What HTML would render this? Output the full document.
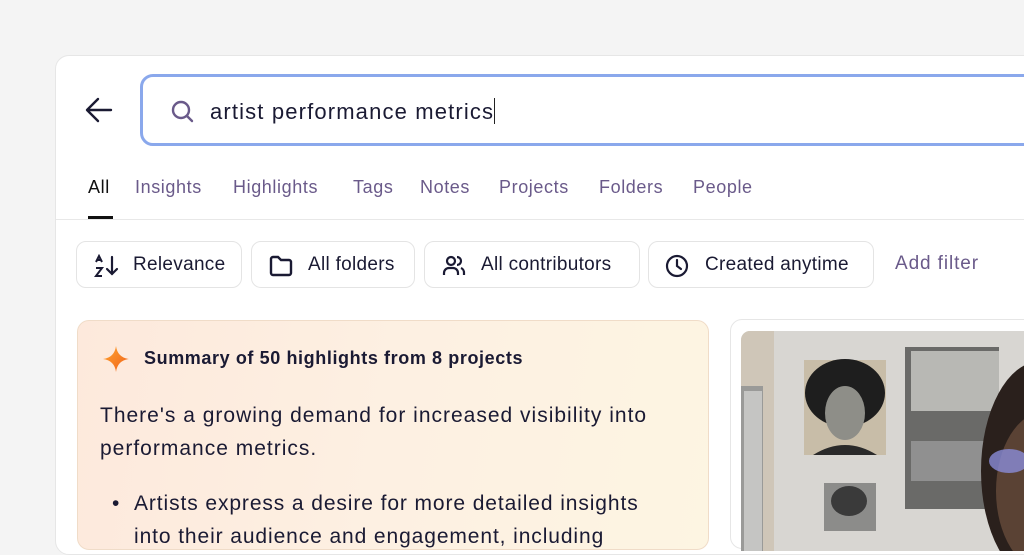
<!DOCTYPE html>
<html><head><meta charset="utf-8"><style>
*{box-sizing:border-box;margin:0;padding:0}
body{width:1024px;height:529px;overflow:hidden;background:#f4f4f4;font-family:"Liberation Sans",sans-serif;color:#1a1a33;position:relative}
.card{position:absolute;left:55px;top:55px;width:1000px;height:500px;background:#fff;border:1px solid #e6e6e6;border-radius:14px}
.search{position:absolute;left:140px;top:74px;width:920px;height:72px;border:3px solid #8aa8ec;border-radius:13px;background:#fff}
.search .txt{position:absolute;left:67px;top:21px;font-size:22px;letter-spacing:1.15px;color:#1a1a33}
.caret{display:inline-block;width:1px;height:26px;background:#222;vertical-align:-5px}
.tabs{position:absolute;top:177px;left:88px;font-size:18px;letter-spacing:.6px;color:#6a5a8a}
.tabs span{position:absolute;white-space:nowrap}
.div{position:absolute;left:56px;top:219px;width:968px;height:1px;background:#e8e8e8}
.ul{position:absolute;left:88px;top:216px;width:25px;height:3px;background:#111}
.chip{position:absolute;top:241px;height:47px;border:1px solid #e4e4e4;border-radius:10px;background:#fff;font-size:19px;letter-spacing:.3px;color:#1a1a33}
.chip span{position:absolute;top:12px;white-space:nowrap}
.chip svg{position:absolute;left:16px;top:12px}
.sum{position:absolute;left:77px;top:320px;width:632px;height:230px;border:1px solid #f0dcc8;border-radius:12px;background:linear-gradient(100deg,#fde9dc 0%,#fdf0e2 50%,#fdf5e2 100%)}
.img{position:absolute;left:730px;top:319px;width:320px;height:230px;border:1px solid #e6e6e6;border-radius:12px;background:#fff}
</style></head><body>
<div class="card"></div>
<svg style="position:absolute;left:84px;top:96px" width="30" height="28" viewBox="0 0 30 28"><path d="M27 14H4M14 3L3 14l11 11" fill="none" stroke="#1a1a33" stroke-width="2.4" stroke-linecap="round" stroke-linejoin="round"/></svg>
<div class="search">
<svg style="position:absolute;left:27px;top:22px" width="26" height="26" viewBox="0 0 26 26"><circle cx="11" cy="11" r="8" fill="none" stroke="#6a5a8a" stroke-width="2.4"/><path d="M17 17l5 5" stroke="#6a5a8a" stroke-width="2.4" stroke-linecap="round"/></svg>
<div class="txt">artist performance metrics<span class="caret"></span></div>
</div>
<div class="tabs">
<span style="left:0;color:#111">All</span><span style="left:47px">Insights</span><span style="left:145px">Highlights</span><span style="left:265px">Tags</span><span style="left:332px">Notes</span><span style="left:411px">Projects</span><span style="left:511px">Folders</span><span style="left:605px">People</span>
</div>
<div class="ul"></div><div class="div"></div>
<div class="chip" style="left:76px;width:166px"><svg width="28" height="24" viewBox="0 0 28 24"><path d="M3 8l3-6 3 6M4 6h4M3 14h6l-6 8h6" fill="none" stroke="#1a1a33" stroke-width="2"/><path d="M19 3v17M14 15l5 5 5-5" fill="none" stroke="#1a1a33" stroke-width="2.2" stroke-linecap="round"/></svg><span style="left:56px">Relevance</span></div>
<div class="chip" style="left:251px;width:164px"><svg width="26" height="24" viewBox="0 0 26 24"><path d="M3 5a2 2 0 0 1 2-2h5l3 3h8a2 2 0 0 1 2 2v11a2 2 0 0 1-2 2H5a2 2 0 0 1-2-2z" fill="none" stroke="#1a1a33" stroke-width="2.4"/></svg><span style="left:56px">All folders</span></div>
<div class="chip" style="left:424px;width:216px"><svg width="26" height="24" viewBox="0 0 26 24"><circle cx="10" cy="7" r="4" fill="none" stroke="#1a1a33" stroke-width="2.2"/><path d="M3 21v-2a5 5 0 0 1 5-5h4a5 5 0 0 1 5 5v2M16 3a4 4 0 0 1 0 8M20 14a5 5 0 0 1 3 5v2" fill="none" stroke="#1a1a33" stroke-width="2.2"/></svg><span style="left:56px">All contributors</span></div>
<div class="chip" style="left:648px;width:226px"><svg width="26" height="24" viewBox="0 0 26 24"><circle cx="12" cy="12" r="10" fill="none" stroke="#1a1a33" stroke-width="2.2"/><path d="M12 6v6l4 3" fill="none" stroke="#1a1a33" stroke-width="2.2" stroke-linecap="round"/></svg><span style="left:56px">Created anytime</span></div>
<div style="position:absolute;left:895px;top:253px;font-size:19px;letter-spacing:.9px;color:#6a5a8a">Add filter</div>
<div class="sum">
<svg style="position:absolute;left:24px;top:24px" width="28" height="28" viewBox="0 0 28 28"><defs><linearGradient id="g" x1="0" y1="0" x2="1" y2="1"><stop offset="0" stop-color="#ffa630"/><stop offset="1" stop-color="#f0601a"/></linearGradient></defs><path d="M14 1Q15.5 12.5 27 14Q15.5 15.5 14 27Q12.5 15.5 1 14Q12.5 12.5 14 1z" fill="url(#g)"/></svg>
<div style="position:absolute;left:66px;top:27px;font-size:18px;letter-spacing:.6px;font-weight:bold;color:#1a1a33;white-space:nowrap">Summary of 50 highlights from 8 projects</div>
<div style="position:absolute;left:22px;top:78px;font-size:21px;letter-spacing:1px;line-height:33px;width:610px;color:#1a1a33">There's a growing demand for increased visibility into<br>performance metrics.</div>
<div style="position:absolute;left:34px;top:166px;font-size:21px;line-height:33px;color:#1a1a33">•</div>
<div style="position:absolute;left:56px;top:166px;font-size:21px;letter-spacing:.9px;line-height:33px;color:#1a1a33;white-space:nowrap">Artists express a desire for more detailed insights<br>into their audience and engagement, including</div>
</div>
<div class="img">
<svg style="position:absolute;left:10px;top:11px;border-radius:9px 0 0 0" width="310" height="220" viewBox="0 0 310 220">
<rect width="310" height="220" fill="#d8d6d2"/>
<rect x="0" y="0" width="33" height="220" fill="#cfc6b8"/>
<rect x="0" y="55" width="22" height="165" fill="#9a9a98"/>
<rect x="3" y="60" width="18" height="160" fill="#c5c5c3"/>
<rect x="63" y="29" width="82" height="95" fill="#c8bda8"/>
<ellipse cx="104" cy="62" rx="40" ry="34" fill="#1e1e1e"/>
<ellipse cx="104" cy="82" rx="20" ry="27" fill="#8e8e88"/>
<path d="M72 124q32-20 64 0z" fill="#2a2a2a"/>
<rect x="164" y="16" width="94" height="162" fill="#6a6a68"/>
<rect x="170" y="20" width="88" height="60" fill="#b8b8b4"/>
<rect x="170" y="110" width="88" height="40" fill="#909090"/>
<rect x="83" y="152" width="52" height="48" fill="#8c8c8a"/>
<ellipse cx="108" cy="170" rx="18" ry="15" fill="#3a3a3a"/>
<ellipse cx="300" cy="140" rx="60" ry="110" fill="#2a201c"/>
<ellipse cx="305" cy="160" rx="50" ry="80" fill="#5a4234"/>
<ellipse cx="268" cy="130" rx="20" ry="12" fill="#8a8cd8" opacity=".8"/>
</svg></div>
</body></html>
